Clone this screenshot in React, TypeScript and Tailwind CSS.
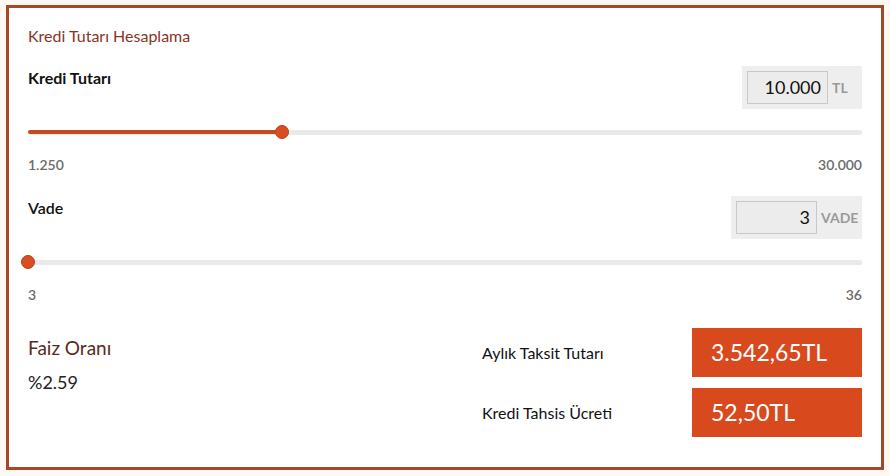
function InputGroup({ value, unit, outerW }: { value: string; unit: string; outerW: string }) {
	return (
		<div className={`flex items-center gap-[4px] p-[5px] h-[43px] bg-[#eeeeee] ${outerW}`}>
			<div className="w-[81px] h-[33px] shrink-0 border border-[#c8c8c8] bg-[#ececec] flex items-center justify-end pr-[6px] text-[18px] text-[#111]">
				{value}
			</div>
			<span className="text-[14px] font-bold text-[#9a9a9a]">{unit}</span>
		</div>
	);
}

function Slider({ pct }: { pct: number }) {
	return (
		<div className="relative h-[14px] flex items-center">
			<div className="w-full h-[5px] rounded-full bg-[#e9e9e9]" />
			<div className="absolute left-0 h-[4px] rounded-full bg-[#c44b1f]" style={{ width: `${pct}%` }} />
			<div
				className="absolute w-[14px] h-[14px] rounded-full bg-[#d84e22] border border-[#b8401a] -translate-x-1/2"
				style={{ left: `${pct}%` }}
			/>
		</div>
	);
}

function App() {
	return (
		<div className="w-[890px] h-[476px] bg-[#fdf9f2] pt-[5px] pl-[6px]" style={{ fontFamily: "Lato, 'Noto Sans', sans-serif" }}>
			<div className="w-[878px] h-[465px] border-[3px] border-[#a4482a] bg-white px-[19px] pt-[18px]">
				<h1 className="text-[16px] leading-[20px] text-[#8a3426]">Kredi Tutarı Hesaplama</h1>

				<div className="mt-[20px] flex justify-between items-start">
					<p className="mt-[2px] text-[16px] leading-[20px] font-bold text-[#111]">Kredi Tutarı</p>
					<InputGroup value="10.000" unit="TL" outerW="w-[120px]" />
				</div>
				<div className="mt-[16px]">
					<Slider pct={30.4} />
				</div>
				<div className="mt-[17px] flex justify-between text-[14px] leading-[18px] font-semibold text-[#6b6b6b]">
					<span>1.250</span>
					<span>30.000</span>
				</div>

				<div className="mt-[22px] flex justify-between items-start">
					<p className="mt-[2px] text-[16px] leading-[20px] font-semibold text-[#111]">Vade</p>
					<InputGroup value="3" unit="VADE" outerW="w-[131px]" />
				</div>
				<div className="mt-[16px]">
					<Slider pct={0} />
				</div>
				<div className="mt-[17px] flex justify-between text-[14px] leading-[18px] font-semibold text-[#6b6b6b]">
					<span>3</span>
					<span>36</span>
				</div>

				<div className="mt-[24px] flex justify-between">
					<div className="pt-[8px]">
						<p className="text-[19px] leading-[24px] text-[#5b2a22]">Faiz Oranı</p>
						<p className="mt-[10px] text-[18px] leading-[24px] text-[#222]">%2.59</p>
					</div>
					<div className="w-[380px] flex flex-col gap-[11px]">
						<div className="flex items-center justify-between">
							<span className="text-[16px] text-[#111]">Aylık Taksit Tutarı</span>
							<div className="w-[170px] h-[49px] bg-[#d8491e] flex items-center pl-[19px] text-[23px] text-white">
								3.542,65TL
							</div>
						</div>
						<div className="flex items-center justify-between">
							<span className="text-[16px] text-[#111]">Kredi Tahsis Ücreti</span>
							<div className="w-[170px] h-[49px] bg-[#d8491e] flex items-center pl-[19px] text-[23px] text-white">
								52,50TL
							</div>
						</div>
					</div>
				</div>
			</div>
		</div>
	);
}

export default App;
